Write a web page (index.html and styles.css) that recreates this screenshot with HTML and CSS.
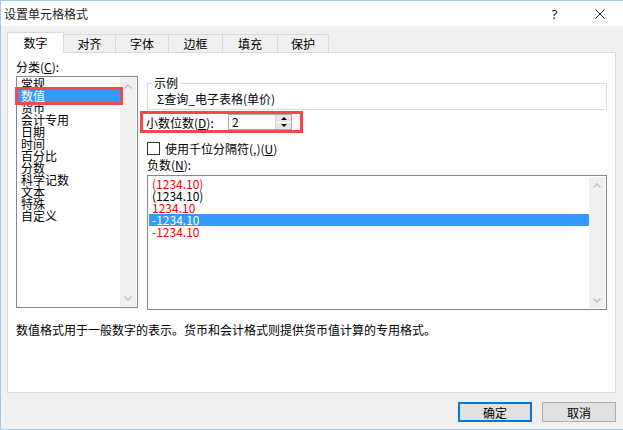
FILE: index.html
```html
<!DOCTYPE html>
<html lang="zh-CN">
<head>
  <meta charset="UTF-8">
  <title>设置单元格格式</title>
  <link rel="stylesheet" href="styles.css">
</head>
<body>
  <div class="window">
    <div class="titlebar">
      <span class="title">设置单元格格式</span>
      <span class="cap-btn help">?</span>
      <span class="cap-btn close">
        <svg width="10" height="10" viewBox="0 0 10 10"><path d="M0.5 0.5 L9.5 9.5 M9.5 0.5 L0.5 9.5" stroke="#222" stroke-width="1" fill="none"/></svg>
      </span>
    </div>

    <div class="content">
      <div class="tabs">
        <div class="tab active">数字</div>
        <div class="tab w53">对齐</div>
        <div class="tab w54">字体</div>
        <div class="tab w55">边框</div>
        <div class="tab w56">填充</div>
        <div class="tab w52">保护</div>
      </div>

      <div class="panel">
        <div class="cols">
          <div class="left">
            <div class="label">分类(<u>C</u>):</div>
            <div class="listbox cat-list">
              <div class="items">
                <div class="item">常规</div>
                <div class="item selected marked">数值</div>
                <div class="item">货币</div>
                <div class="item">会计专用</div>
                <div class="item">日期</div>
                <div class="item">时间</div>
                <div class="item">百分比</div>
                <div class="item">分数</div>
                <div class="item">科学记数</div>
                <div class="item">文本</div>
                <div class="item">特殊</div>
                <div class="item">自定义</div>
              </div>
              <div class="vscroll">
                <svg width="8" height="5" viewBox="0 0 8 5"><path d="M0.5 4.5 L4 1 L7.5 4.5" stroke="#c4c4c4" stroke-width="1.6" fill="none"/></svg>
                <svg width="8" height="5" viewBox="0 0 8 5"><path d="M0.5 0.5 L4 4 L7.5 0.5" stroke="#c4c4c4" stroke-width="1.6" fill="none"/></svg>
              </div>
            </div>
          </div>

          <div class="right">
            <fieldset class="sample">
              <legend>示例</legend>
              <div class="sample-text">Σ查询_电子表格(单价)</div>
            </fieldset>

            <div class="decimals">
              <span class="dec-label">小数位数(<u>D</u>):</span>
              <div class="spinner">
                <span class="spin-value">2</span>
                <div class="spin-btns">
                  <span class="spin-up"></span>
                  <span class="spin-down"></span>
                </div>
              </div>
            </div>

            <div class="check-row">
              <span class="checkbox"></span>
              <span>使用千位分隔符(,)(<u>U</u>)</span>
            </div>

            <div class="label neg-label">负数(<u>N</u>):</div>
            <div class="listbox neg-list">
              <div class="items">
                <div class="item red">(1234.10)</div>
                <div class="item">(1234.10)</div>
                <div class="item red">1234.10</div>
                <div class="item selected">-1234.10</div>
                <div class="item red">-1234.10</div>
              </div>
              <div class="vscroll">
                <svg width="8" height="5" viewBox="0 0 8 5"><path d="M0.5 4.5 L4 1 L7.5 4.5" stroke="#c4c4c4" stroke-width="1.6" fill="none"/></svg>
                <svg width="8" height="5" viewBox="0 0 8 5"><path d="M0.5 0.5 L4 4 L7.5 0.5" stroke="#c4c4c4" stroke-width="1.6" fill="none"/></svg>
              </div>
            </div>
          </div>
        </div>

        <p class="desc">数值格式用于一般数字的表示。货币和会计格式则提供货币值计算的专用格式。</p>
      </div>

      <div class="buttons">
        <button class="btn default">确定</button>
        <button class="btn">取消</button>
      </div>
    </div>
  </div>
</body>
</html>
```

FILE: styles.css
```css
body { margin: 0; background: #f0f0f0; font-family: "Noto Sans CJK SC", "Noto Sans", sans-serif; font-size: 12px; color: #000; overflow: hidden; }
.window { width: 623px; height: 430px; box-sizing: border-box; border: 1px solid #a6c9ec; border-right: 0; display: flex; flex-direction: column; }

.titlebar { height: 25px; background: #fff; display: flex; align-items: center; padding-left: 3px; }
.title { font-size: 12px; color: #222; flex: 1; }
.cap-btn { height: 25px; display: flex; align-items: center; justify-content: center; }
.help { width: 45px; font-family: "Noto Sans", sans-serif; font-size: 13px; color: #222; }
.close { width: 46px; }

.content { flex: 1; padding: 6px 7px 0 6px; }

.tabs { display: flex; align-items: flex-end; height: 20px; position: relative; z-index: 1; }
.tab { box-sizing: border-box; height: 18px; width: 54px; border: 1px solid #d9d9d9; border-bottom: 0; margin-left: -1px; background: #f0f0f0; text-align: center; line-height: 17px; }
.tab.active { width: 57px; height: 21px; margin-left: 0; margin-bottom: -1px; background: #fff; line-height: 20px; }
.tab.w52 { width: 52px; }
.tab.w53 { width: 53px; }
.tab.w54 { width: 54px; }
.tab.w55 { width: 55px; }
.tab.w56 { width: 56px; }

.panel { box-sizing: border-box; width: 609px; height: 341px; background: #fff; border: 1px solid #d9d9d9; padding: 7px 7px 0 8px; }
.cols { display: grid; grid-template-columns: 122px 460px; column-gap: 9px; }

.label { line-height: 14px; height: 14px; }
.label u, .dec-label u, .check-row u { text-decoration-thickness: 1px; text-underline-offset: 1px; }

.listbox { box-sizing: border-box; border: 1px solid #828790; background: #fff; display: flex; padding: 1px; }
.items { flex: 1; }
.item { line-height: 12px; height: 12px; padding-left: 3px; white-space: nowrap; }
.item.selected { background: #3399ff; color: #fff; }
.item.red { color: #ff0000; }
.vscroll { width: 16px; background: #f0f0f0; display: flex; flex-direction: column; justify-content: space-between; align-items: center; padding: 6px 0 5px; box-sizing: border-box; }

.cat-list { margin-top: 2px; height: 232px; }
.cat-list .items { padding-top: 0; }
.cat-list .item { padding-left: 3px; }
.item.marked { outline: 3px solid #f24a4a; outline-offset: 0; position: relative; }

.right { margin-top: 16px; }
.sample { margin: 0; padding: 0 9px 3px; border: 1px solid #dcdcdc; min-width: 0; }
.sample legend { padding: 0 2px; margin-left: -5px; line-height: 14px; }
.sample-text { line-height: 14px; padding-top: 2px; }

.decimals { box-sizing: border-box; width: 163px; height: 22px; margin: 1px 0 0 -7px; border: 3px solid #f24a4a; display: flex; align-items: center; padding-left: 3px; }
.dec-label { width: 82px; }
.spinner { box-sizing: border-box; width: 64px; height: 16px; border: 1px solid #a9abb2; display: flex; background: #fff; }
.spin-value { flex: 1; padding-left: 3px; line-height: 14px; }
.spin-btns { width: 15px; display: flex; flex-direction: column; border-left: 1px solid #d4d4d4; }
.spin-up, .spin-down { flex: 1; background: #e6e6e6; display: flex; align-items: center; justify-content: center; }
.spin-up { border-bottom: 1px solid #fff; }
.spin-up::before { content: ""; border-left: 3px solid transparent; border-right: 3px solid transparent; border-bottom: 3px solid #000; }
.spin-down::before { content: ""; border-left: 3px solid transparent; border-right: 3px solid transparent; border-top: 3px solid #000; }

.check-row { display: flex; align-items: center; height: 16px; margin-top: 7px; }
.checkbox { box-sizing: border-box; width: 13px; height: 13px; border: 1px solid #333; background: #fff; margin-right: 5px; }

.neg-label { margin-top: 2px; }
.neg-list { margin-top: 3px; height: 135px; }
.neg-list .items { padding-top: 1px; }

.desc { margin: 12px 0 0; line-height: 16px; }

.buttons { display: flex; justify-content: flex-end; gap: 10px; margin-top: 9px; }
.btn { box-sizing: border-box; width: 74px; height: 20px; padding: 0; font: inherit; color: #000; background: #e1e1e1; border: 1px solid #adadad; line-height: 17px; }
.btn.default { border: 2px solid #0078d7; line-height: 15px; }
```
